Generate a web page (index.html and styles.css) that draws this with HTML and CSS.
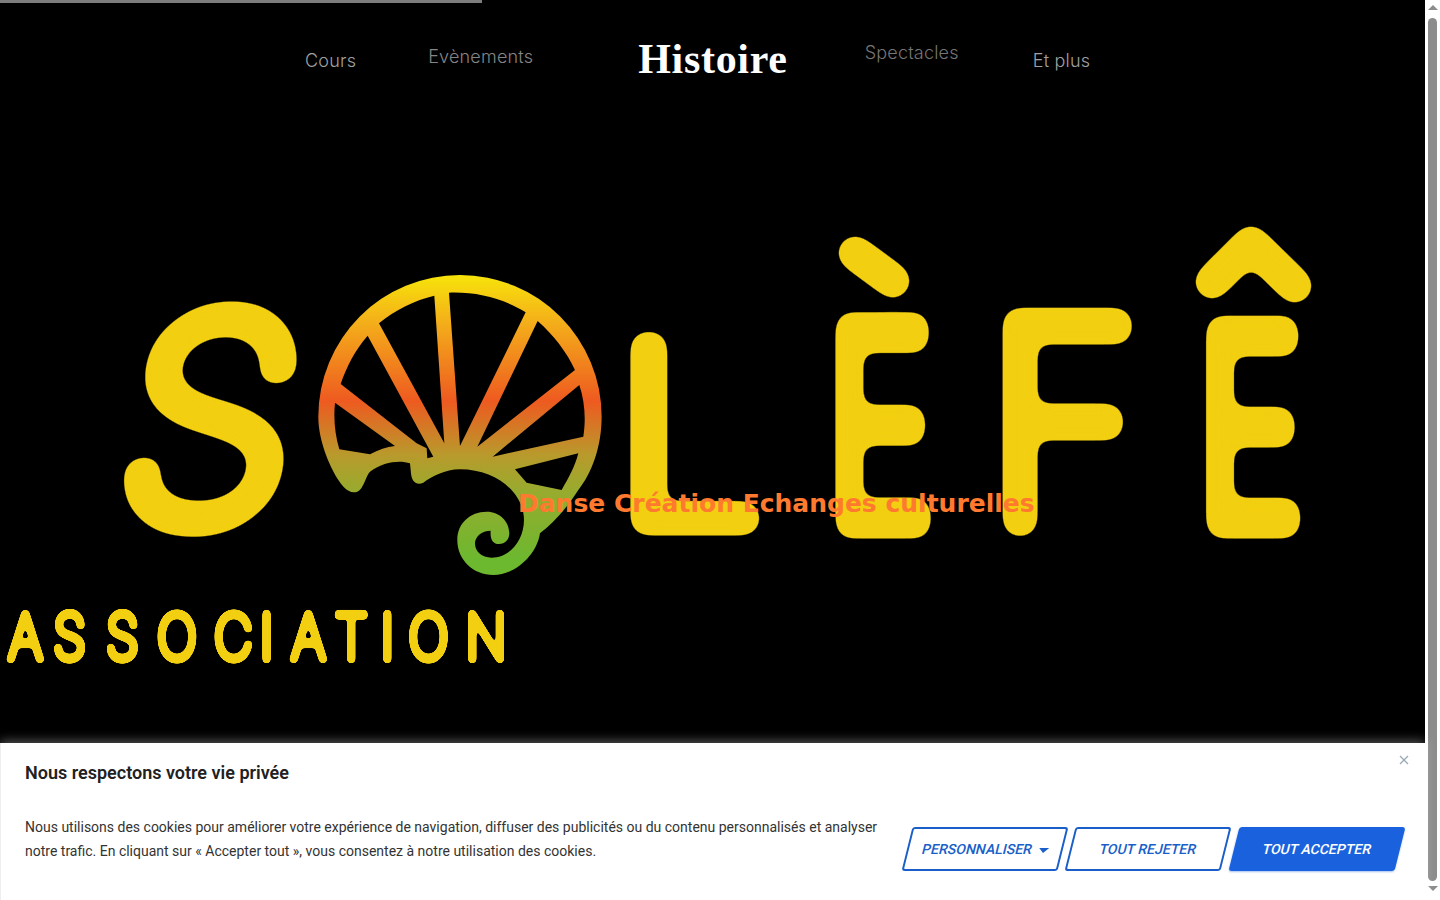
FILE: index.html
```html
<!DOCTYPE html>
<html lang="fr">

<head>
    <meta charset="UTF-8">
    <meta name="viewport" content="width=device-width, initial-scale=1.0">
    <title>Solèfê</title>
    <link rel="stylesheet" href="styles.css">
</head>

<body>
    <div class="page">
        <main class="site">
            <section class="hero">
                <div class="progress"></div>
                <nav class="menu">
                    <a class="menu-cours" href="#">Cours</a>
                    <a class="menu-events" href="#">Evènements</a>
                    <a class="menu-brand" href="#">Histoire</a>
                    <a class="menu-shows" href="#">Spectacles</a>
                    <a class="menu-more" href="#">Et plus</a>
                </nav>

                <svg class="logo" viewBox="0 110 1425 633" width="1425" height="633" role="img" aria-label="Solèfê Association">
                    <defs>
                        <linearGradient id="wheelColor" gradientUnits="userSpaceOnUse" x1="0" y1="45" x2="0" y2="945">
                            <stop offset="0" stop-color="#f7e40a"/>
                            <stop offset="0.16" stop-color="#f4ae1a"/>
                            <stop offset="0.42" stop-color="#ee5a20"/>
                            <stop offset="0.6" stop-color="#b89a2c"/>
                            <stop offset="0.72" stop-color="#98ab2e"/>
                            <stop offset="0.95" stop-color="#6cb82f"/>
                        </linearGradient>
                        <!-- blur then threshold, makes the hand drawn round corners -->
                        <filter id="roundBig" filterUnits="userSpaceOnUse" x="0" y="110" width="1425" height="633" color-interpolation-filters="sRGB">
                            <feGaussianBlur stdDeviation="7"/>
                            <feComponentTransfer><feFuncA type="linear" slope="14" intercept="-6.5"/></feComponentTransfer>
                        </filter>
                        <filter id="roundSmall" filterUnits="userSpaceOnUse" x="0" y="110" width="1425" height="633" color-interpolation-filters="sRGB">
                            <feGaussianBlur stdDeviation="1.6"/>
                            <feComponentTransfer><feFuncA type="linear" slope="8" intercept="-3.5"/></feComponentTransfer>
                        </filter>
                    </defs>

                    <g filter="url(#roundBig)">
                        <text class="big-letter" transform="translate(110 519) scale(2.8 2.75) skewX(-9)">S</text>
                        <text class="big-letter" transform="translate(617 521) scale(2.55 2.41)">L</text>
                        <text class="big-letter" transform="translate(827 521) scale(1.8 2.63)">E</text>
                        <text class="big-letter" transform="translate(988 521) scale(2.58 2.72)">F</text>
                        <text class="big-letter" transform="translate(1198 521) scale(1.77 2.58)">E</text>

                        <!-- accents -->
                        <line class="accent" x1="855" y1="253" x2="893" y2="281"/>
                        <polyline class="accent" points="1212,282 1251,243 1295,286"/>
                    </g>

                    <!-- wheel, points taken at 3x -->
                    <g transform="translate(300 260) scale(0.3333)">
                        <path fill="url(#wheelColor)" fill-rule="evenodd" d="M160 697 C130 695 100 640 80 590 C65 550 55 510 55 470 A425 425 0 0 1 905 470 C905 560 875 640 835 690 C800 745 760 790 720 820 C712 880 650 945 580 945 C520 945 472 900 472 840 C472 790 510 755 560 755 C600 755 628 785 628 820 C628 840 615 852 597 852 C580 852 570 840 572 812 C545 812 525 830 525 850 C525 875 545 893 575 893 C630 893 672 840 672 780 C672 700 590 628 480 628 C435 628 395 650 370 668 C350 678 335 665 333 640 L330 610 C300 600 250 605 210 635 C195 650 190 700 160 697 Z
                        M105 428 L285 558 C260 560 235 570 210 583 L118 568 C105 525 100 475 105 428 Z
                        M122 372 C140 320 165 270 203 227 L400 590 L382 595 L380 565 L350 550 Z
                        M237 190 C285 150 345 120 403 107 L433 550 Z
                        M447 98 C530 95 610 115 677 157 L480 558 Z
                        M713 183 C760 225 800 275 825 330 L532 560 Z
                        M838 375 C855 425 858 480 850 530 L578 590 Z
                        M835 580 C825 620 805 655 785 690 L680 668 L645 628 Z"/>
                    </g>

                    <g filter="url(#roundSmall)">
                        <text class="small-word" transform="scale(0.85 1)" y="659" x="10 63 125 185 252 306 343 394 448 481 548">ASSOCIATION</text>
                    </g>
                </svg>

                <p class="tagline">Danse Création Echanges culturelles</p>
            </section>

            <section class="cookies">
                <button class="cookies-close" type="button" aria-label="Fermer">
                    <svg viewBox="0 0 10 10" width="10" height="10"><path d="M1 1 L9 9 M9 1 L1 9"/></svg>
                </button>
                <h2>Nous respectons votre vie privée</h2>
                <div class="cookies-row">
                    <p>Nous utilisons des cookies pour améliorer votre expérience de navigation, diffuser des publicités ou du contenu personnalisés et analyser notre trafic. En cliquant sur « Accepter tout », vous consentez à notre utilisation des cookies.</p>
                    <div class="cookies-actions">
                        <button class="btn btn-custom" type="button">Personnaliser <span class="caret"></span></button>
                        <button class="btn btn-reject" type="button">Tout rejeter</button>
                        <button class="btn btn-accept" type="button">Tout accepter</button>
                    </div>
                </div>
            </section>
        </main>

        <div class="scrollbar">
            <span class="arrow-up"></span>
            <span class="thumb"></span>
            <span class="arrow-down"></span>
        </div>
    </div>
</body>

</html>
```

FILE: styles.css
```css
* {
    box-sizing: border-box;
}

html,
body {
    height: 100%;
}

body {
    margin: 0;
    overflow: hidden;
    background: #fff;
    font-family: "Roboto", sans-serif;
}

.page {
    display: flex;
    height: 900px;
}

.site {
    display: flex;
    flex-direction: column;
    width: 1425px;
}

/* hero */
.hero {
    position: relative;
    height: 743px;
    background: #000;
}

.progress {
    position: absolute;
    top: 0;
    left: 0;
    width: 482px;
    height: 3px;
    background: #7d7d7d;
}

.menu {
    display: flex;
    align-items: flex-start;
    height: 110px;
    padding-left: 305px;
    font-family: "Inter", sans-serif;
    font-size: 18px;
    font-weight: 300;
    letter-spacing: 0.2px;
}

.menu a {
    text-decoration: none;
}

.menu-cours {
    margin-top: 50px;
    color: #a0a0a0;
}

.menu-events {
    margin: 46px 0 0 72px;
    color: #858585;
}

.menu-brand {
    margin: 35px 0 0 105px;
    color: #fff;
    font-family: "Liberation Serif", serif;
    font-size: 42px;
    font-weight: 700;
    line-height: 48px;
    letter-spacing: 0.7px;
}

.menu-shows {
    margin: 42px 0 0 77px;
    color: #757575;
}

.menu-more {
    margin: 50px 0 0 74px;
    color: #a0a0a0;
}

.logo {
    display: block;
}

.big-letter,
.small-word {
    font-family: "Inter", sans-serif;
    font-weight: 100;
    fill: #f2cf10;
    stroke: #f2cf10;
    stroke-linejoin: round;
    stroke-linecap: round;
    vector-effect: non-scaling-stroke;
}

.big-letter {
    font-size: 100px;
    stroke-width: 30px;
}

.small-word {
    font-size: 62px;
    stroke-width: 8px;
}

.accent {
    fill: none;
    stroke: #f2cf10;
    stroke-width: 35px;
    stroke-linecap: round;
    stroke-linejoin: round;
}

.tagline {
    position: absolute;
    top: 488px;
    left: 518px;
    margin: 0;
    color: #ff7a2e;
    font-family: "DejaVu Sans", sans-serif;
    font-size: 25px;
    font-weight: 700;
    line-height: 32px;
    white-space: nowrap;
}

/* cookie banner */
.cookies {
    position: relative;
    height: 157px;
    padding: 20px 20px 0 24px;
    border-left: 1px solid #eee;
    background: #fff;
    box-shadow: 0 -2px 10px rgba(255, 255, 255, 0.35);
    color: #212121;
}

.cookies h2 {
    margin: 0 0 32px;
    font-size: 18px;
    font-weight: 600;
    line-height: 20px;
}

.cookies-row {
    display: flex;
    align-items: flex-start;
    justify-content: space-between;
}

.cookies p {
    width: 860px;
    margin: 0;
    color: #333;
    font-size: 14px;
    line-height: 24px;
}

.cookies-close {
    position: absolute;
    top: 12px;
    right: 16px;
    padding: 0;
    border: 0;
    background: none;
}

.cookies-close svg {
    display: block;
    fill: none;
    stroke: #9aa8b8;
    stroke-width: 1.3;
}

.cookies-actions {
    display: flex;
    gap: 8px;
    margin: 12px 5px 0 0;
}

.btn {
    height: 44px;
    padding: 0;
    border: 2px solid #1a5fc9;
    border-radius: 3px;
    background: #fff;
    color: #1a5fc9;
    font-family: "Roboto", sans-serif;
    font-size: 14px;
    font-weight: 500;
    text-transform: uppercase;
    transform: skewX(-14deg);
}

.btn-custom {
    width: 156px;
    margin-right: -1px;
    padding-left: 1px;
}

.btn-reject {
    width: 156px;
}

.btn-accept {
    width: 166px;
    background: #1a62dd;
    border-color: #1a62dd;
    box-shadow: 0 1px 2px rgba(26, 98, 221, 0.4);
    color: #fff;
}

.caret {
    display: inline-block;
    width: 0;
    height: 0;
    margin-left: 3px;
    vertical-align: middle;
    border-left: 5px solid transparent;
    border-right: 5px solid transparent;
    border-top: 5px solid #1a5fc9;
}

/* scrollbar */
.scrollbar {
    display: flex;
    flex-direction: column;
    align-items: center;
    width: 15px;
    height: 900px;
    background: #fff;
}

.arrow-up,
.arrow-down {
    width: 0;
    height: 0;
    border-left: 5px solid transparent;
    border-right: 5px solid transparent;
}

.arrow-up {
    margin-top: 5px;
    border-bottom: 5px solid #8c8c8c;
}

.thumb {
    width: 9px;
    height: 863px;
    margin: 8px 0 5px;
    border-radius: 5px;
    background: #8c8c8c;
}

.arrow-down {
    border-top: 5px solid #8c8c8c;
}
```
